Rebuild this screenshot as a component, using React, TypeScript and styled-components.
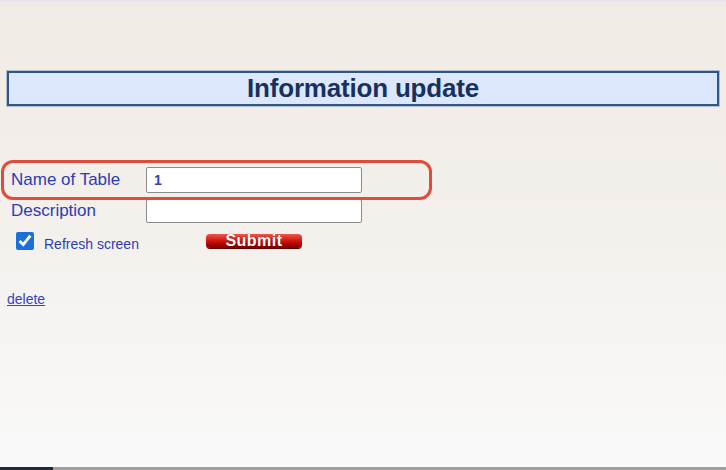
import styled, {createGlobalStyle} from 'styled-components'

const GlobalStyle = createGlobalStyle`
  html, body {
    margin: 0;
    padding: 0;
    background: #fafafa;
  }
  * {
    box-sizing: border-box;
  }
`

const FONT = `"Liberation Sans", Arial, sans-serif`

const Page = styled.div`
  position: relative;
  display: flex;
  flex-direction: column;
  min-height: 470px;
  padding-top: 69px;
  border-top: 2px solid #ebe2ec;
  background: linear-gradient(#f1ebe5 0%, #f3efeb 45%, #fafafa 100%);
  font-family: ${FONT};
`

const TitleBar = styled.div`
  display: flex;
  align-items: center;
  justify-content: center;
  height: 35px;
  margin: 0 7px;
  border: 2px solid #2d5689;
  box-shadow: 0 0 0 1px #b3bfcc;
  background: #dce7fd;
  color: #17305e;
  font-size: 26px;
  font-weight: bold;
  letter-spacing: -0.2px;
`

const Form = styled.form`
  display: flex;
  flex-direction: column;
  margin-top: 61px;
  padding-left: 11px;
`

const Fields = styled.div`
  display: grid;
  grid-template-columns: 135px 216px;
  row-gap: 6px;
  align-items: center;
`

const Label = styled.label`
  color: #2a3db5;
  font-size: 17px;
`

const TextInput = styled.input<{$tall?: boolean}>`
  width: 216px;
  height: ${({$tall}) => ($tall ? 26 : 24)}px;
  padding: 0 7px;
  border: 1px solid #8c8c8c;
  border-radius: 2px;
  background: #fff;
  color: #2b46b8;
  font-family: ${FONT};
  font-size: 14px;
  font-weight: bold;
  outline: none;
`

const OptionsRow = styled.div`
  display: flex;
  align-items: center;
  margin-top: 7px;
  padding-left: 5px;
`

const CheckBox = styled.input`
  width: 18px;
  height: 18px;
  margin: 0 10px 0 0;
  accent-color: #1a6fd8;
`

const RefreshLabel = styled.span`
  width: 162px;
  padding-top: 6px;
  color: #2a3db5;
  font-size: 14px;
`

const SubmitButton = styled.button`
  width: 96px;
  height: 14px;
  padding: 0;
  border: none;
  border-radius: 4px;
  background: linear-gradient(#f0584a 0%, #d21a12 45%, #b00404 70%, #7d0000 100%);
  box-shadow: 0 1px 0 #5a0000;
  color: #fff;
  font-family: ${FONT};
  font-size: 16px;
  font-weight: bold;
  letter-spacing: 0.5px;
  line-height: 14px;
  text-shadow: 0 0 1px #600;
`

const DeleteLink = styled.a`
  align-self: flex-start;
  margin: 39px 0 0 7px;
  color: #3346c2;
  font-size: 14px;
  text-decoration: underline;
`

const Footer = styled.div`
  display: flex;
  height: 3px;
  margin-top: auto;
  background: #9e9e9e;
`

const FooterTab = styled.div`
  width: 53px;
  background: #1c2b38;
`

const Highlight = styled.div`
  position: absolute;
  left: 1px;
  top: 158px;
  width: 431px;
  height: 40px;
  border: 3px solid #e14b3b;
  border-radius: 12px;
  pointer-events: none;
`

export default function App() {
  return (
    <>
      <GlobalStyle />
      <Page>
        <TitleBar>Information update</TitleBar>

        <Form onSubmit={(e) => e.preventDefault()}>
          <Fields>
            <Label htmlFor="name">Name of Table</Label>
            <TextInput id="name" $tall defaultValue="1" />
            <Label htmlFor="desc">Description</Label>
            <TextInput id="desc" />
          </Fields>

          <OptionsRow>
            <CheckBox type="checkbox" defaultChecked />
            <RefreshLabel>Refresh screen</RefreshLabel>
            <SubmitButton type="submit">Submit</SubmitButton>
          </OptionsRow>
        </Form>

        <DeleteLink href="#">delete</DeleteLink>

        <Footer>
          <FooterTab />
        </Footer>

        <Highlight />
      </Page>
    </>
  )
}
